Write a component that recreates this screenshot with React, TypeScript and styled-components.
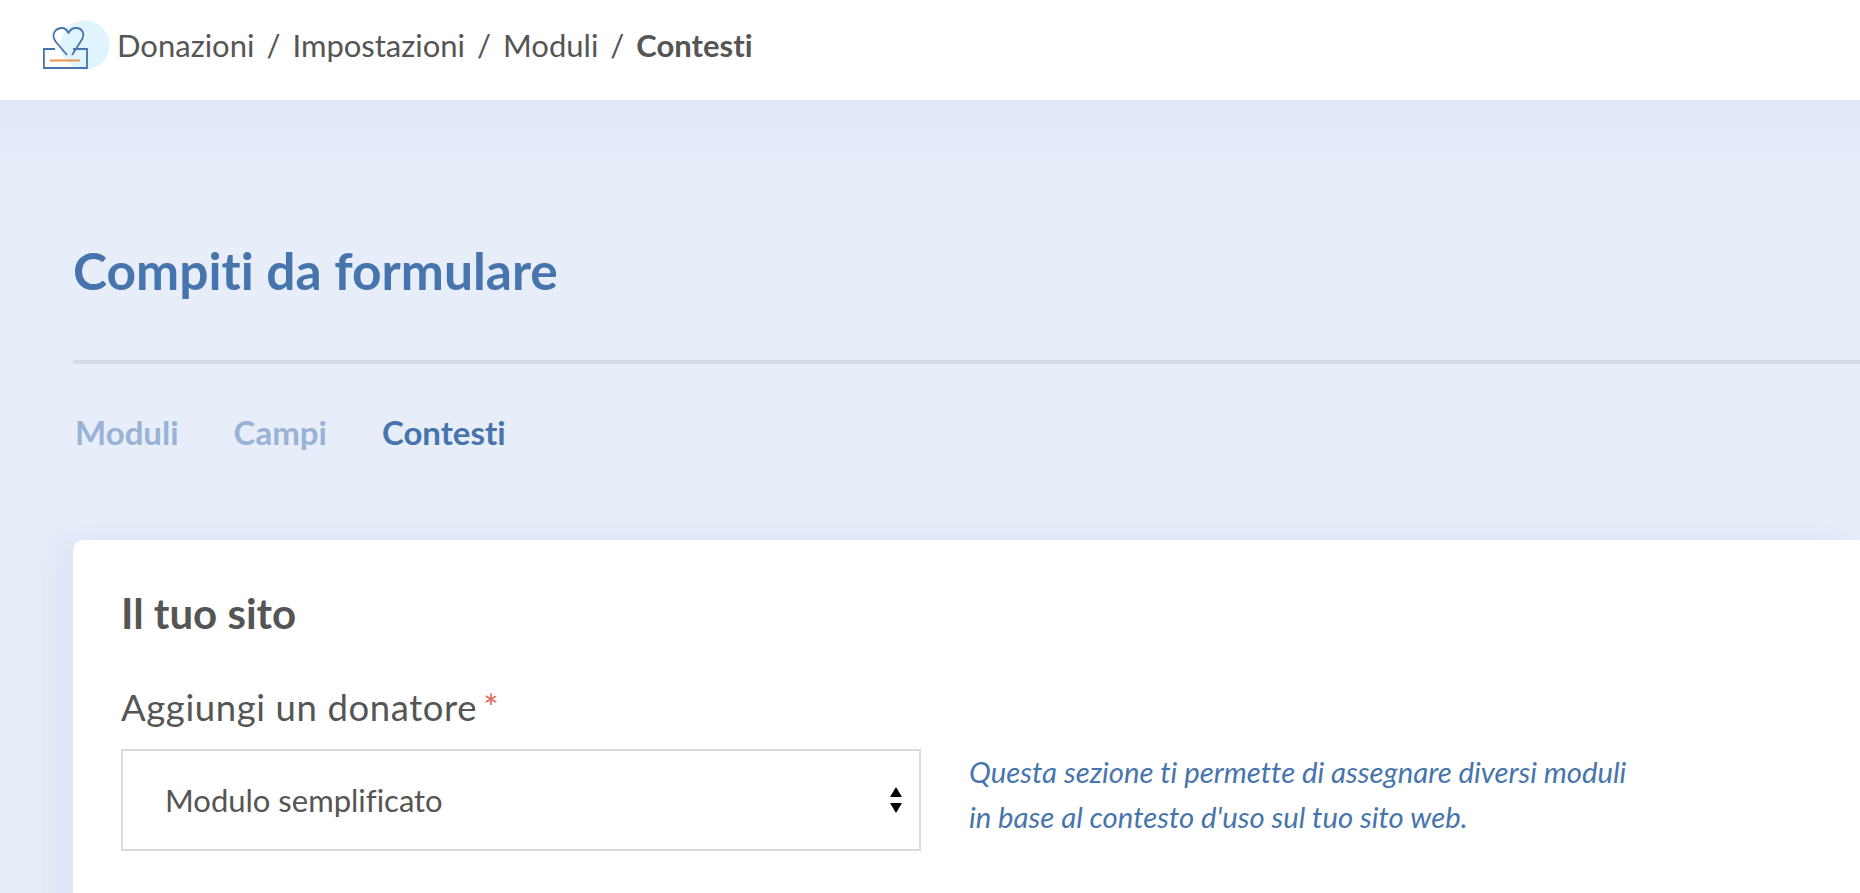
import React from "react";
import styled, { createGlobalStyle } from "styled-components";

const GlobalStyle = createGlobalStyle`
    html, body {
        margin: 0;
        padding: 0;
        height: 100%;
        overflow: hidden;
        background: #e8eef9;
    }
    body {
        font-family: "Lato", "Open Sans", sans-serif;
        font-variant-ligatures: none;
    }
`;

const Page = styled.div`
    width: 1860px;
    height: 893px;
    overflow: hidden;
`;

const TopBar = styled.header`
    height: 100px;
    background: #ffffff;
    display: flex;
    align-items: center;
    padding: 0 0 10px 43px;
    box-sizing: border-box;
`;

const Crumbs = styled.nav`
    display: flex;
    align-items: center;
    margin-left: 6px;
    font-size: 31px;
    color: #555555;
`;

const Crumb = styled.span<{ $current?: boolean }>`
    font-weight: ${(p) => (p.$current ? 700 : 400)};
`;

const Slash = styled.span`
    margin: 0 12px;
`;

const Content = styled.main`
    height: 793px;
    box-sizing: border-box;
    padding: 0 0 0 73px;
    background: linear-gradient(#e1e7f7 0, #e8eef9 80px);
`;

const Title = styled.h1`
    margin: 0;
    padding-top: 141px;
    font-size: 51.5px;
    line-height: 58px;
    font-weight: 700;
    color: #4674ac;
`;

const Divider = styled.hr`
    margin: 61px 0 0;
    border: 0;
    height: 4px;
    background: #d4dce8;
`;

const Tabs = styled.div`
    display: flex;
    gap: 55px;
    margin: 49px 0 0 2px;
`;

const Tab = styled.span<{ $active?: boolean }>`
    font-size: 33px;
    line-height: 38px;
    font-weight: 700;
    color: ${(p) => (p.$active ? "#4674ac" : "#99b3d6")};
`;

const Card = styled.section`
    margin-top: 89px;
    height: 400px;
    background: #ffffff;
    border-radius: 10px 0 0 0;
    box-shadow: -14px 0 30px rgba(200, 214, 244, 0.45);
    padding: 51px 48px 0;
    box-sizing: border-box;
`;

const CardTitle = styled.h2`
    margin: 0;
    font-size: 42px;
    line-height: 44px;
    font-weight: 700;
    color: #555555;
`;

const FieldLabel = styled.label`
    display: block;
    margin-top: 52px;
    font-size: 36.5px;
    line-height: 40px;
    letter-spacing: 0.6px;
    color: #555555;
`;

const Required = styled.span`
    margin-left: 6px;
    color: #e06c5c;
`;

const FieldRow = styled.div`
    display: flex;
    align-items: center;
    gap: 48px;
    margin-top: 22px;
`;

const SelectBox = styled.div`
    width: 800px;
    height: 102px;
    box-sizing: border-box;
    border: 2px solid #d6dce4;
    display: flex;
    align-items: center;
    justify-content: space-between;
    padding: 0 17px 0 42px;
    font-size: 31px;
    color: #555555;
`;

const Arrows = styled.svg`
    width: 12px;
    height: 26px;
`;

const Help = styled.p`
    margin: 0;
    padding-bottom: 12px;
    font-size: 29.3px;
    line-height: 45px;
    font-style: italic;
    color: #4674ac;
`;

const Logo = () => (
    <svg width="68" height="50" viewBox="0 0 68 50" fill="none">
        <circle cx="42" cy="25" r="24.5" fill="#dff4fc" />
        <path
            d="M24 35 L13 22 C7 14 13 8 19 8 C22 8 24 10 25.5 13 C27 10 29 8 33 8 C39 8 43 14 38 21 L29 35"
            stroke="#4674ac"
            strokeWidth="1.8"
            strokeLinejoin="round"
        />
        <path d="M12 29 H0.9 V48 H44 V29 H30" stroke="#4674ac" strokeWidth="1.8" />
        <path d="M7 40.5 H37" stroke="#ec9350" strokeWidth="2" />
    </svg>
);

const App = () => {
    return (
        <Page>
            <GlobalStyle />
            <TopBar>
                <Logo />
                <Crumbs>
                    <Crumb>Donazioni</Crumb>
                    <Slash>/</Slash>
                    <Crumb>Impostazioni</Crumb>
                    <Slash>/</Slash>
                    <Crumb>Moduli</Crumb>
                    <Slash>/</Slash>
                    <Crumb $current>Contesti</Crumb>
                </Crumbs>
            </TopBar>
            <Content>
                <Title>Compiti da formulare</Title>
                <Divider />
                <Tabs>
                    <Tab>Moduli</Tab>
                    <Tab>Campi</Tab>
                    <Tab $active>Contesti</Tab>
                </Tabs>
                <Card>
                    <CardTitle>Il tuo sito</CardTitle>
                    <FieldLabel>
                        Aggiungi un donatore<Required>*</Required>
                    </FieldLabel>
                    <FieldRow>
                        <SelectBox>
                            Modulo semplificato
                            <Arrows viewBox="0 0 12 26">
                                <path d="M6 0 L12 10 H0 Z M0 16 H12 L6 26 Z" fill="#000000" />
                            </Arrows>
                        </SelectBox>
                        <Help>
                            Questa sezione ti permette di assegnare diversi moduli
                            <br />
                            in base al contesto d'uso sul tuo sito web.
                        </Help>
                    </FieldRow>
                </Card>
            </Content>
        </Page>
    );
};

export default App;
